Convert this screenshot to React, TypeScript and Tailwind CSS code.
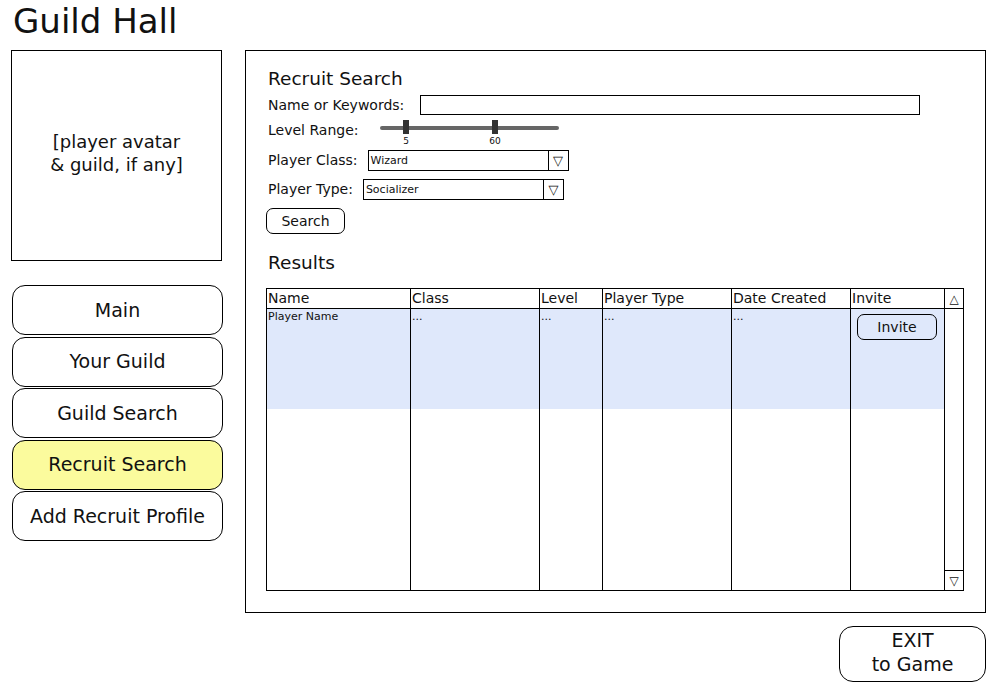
import React from "react";

const nav = ["Main", "Your Guild", "Guild Search", "Recruit Search", "Add Recruit Profile"];

const columns = [
	{ title: "Name", w: "w-[144px]", cell: "Player Name" },
	{ title: "Class", w: "w-[129px]", cell: "..." },
	{ title: "Level", w: "w-[63px]", cell: "..." },
	{ title: "Player Type", w: "w-[129px]", cell: "..." },
	{ title: "Date Created", w: "w-[119px]", cell: "..." },
];

function Dropdown({ value, width }: { value: string; width: string }) {
	return (
		<div className={`flex h-[21px] ${width} border border-black bg-white`}>
			<div className="flex-1 pl-[2px] text-[11px] leading-[19px]">{value}</div>
			<div className="flex w-[20px] items-center justify-center border-l border-black text-[13px] leading-none">
				▽
			</div>
		</div>
	);
}

export default function App() {
	return (
		<div className="h-[693px] w-[994px] bg-white font-['DejaVu_Sans',sans-serif] text-[#111]">
			<div className="h-[50px] pl-[13px] pt-[4px] text-[34px] leading-[34px]">Guild Hall</div>

			<div className="flex pl-[11px]">
				{/* left column */}
				<div className="flex w-[212px] flex-col">
					<div className="flex h-[211px] w-[211px] flex-col items-center justify-center border border-black pb-[5px] text-center text-[18px] leading-[23px]">
						<div>[player avatar</div>
						<div>&amp; guild, if any]</div>
					</div>
					<div className="ml-[1px] mt-[24px] flex flex-col gap-[1.5px]">
						{nav.map((n) => (
							<div
								key={n}
								className={`flex h-[50px] w-[211px] items-center justify-center rounded-[13px] border border-black text-[19px] ${
									n === "Recruit Search" ? "bg-[#fbfb9d]" : "bg-white"
								}`}
							>
								{n}
							</div>
						))}
					</div>
				</div>

				{/* right column */}
				<div className="ml-[22px] flex w-[741px] flex-col">
					<div className="flex h-[563px] flex-col border border-black pl-[22px]">
						<div className="mt-[16px] h-[24px] text-[18.5px] leading-[24px]">Recruit Search</div>

						<div className="mt-[4px] flex h-[20px] items-center gap-[16px]">
							<div className="text-[14px] leading-[20px]">Name or Keywords:</div>
							<div className="h-[20px] w-[500px] border border-black" />
						</div>

						<div className="mt-[2px] flex h-[30px]">
							<div className="mt-[5px] w-[112px] text-[14px] leading-[16px]">Level Range:</div>
							<div className="relative h-[30px] w-[180px]">
								<div className="absolute left-0 top-[9px] h-[4px] w-[179px] rounded-full bg-[#666]" />
								<div className="absolute left-[23px] top-[3px] h-[14px] w-[6px] bg-[#333]" />
								<div className="absolute left-[112px] top-[3px] h-[14px] w-[6px] bg-[#333]" />
								<div className="absolute left-[16px] top-[18px] w-[20px] text-center text-[9px] leading-[12px]">5</div>
								<div className="absolute left-[105px] top-[18px] w-[20px] text-center text-[9px] leading-[12px]">60</div>
							</div>
						</div>

						<div className="mt-[3px] flex h-[21px] items-center gap-[10px]">
							<div className="text-[14px]">Player Class:</div>
							<Dropdown value="Wizard" width="w-[201px]" />
						</div>

						<div className="mt-[8px] flex h-[21px] items-center gap-[10px]">
							<div className="text-[14px]">Player Type:</div>
							<Dropdown value="Socializer" width="w-[201px]" />
						</div>

						<div className="-ml-[2px] mt-[8px] flex h-[26px] w-[79px] items-center justify-center rounded-[7px] border border-black text-[14px]">
							Search
						</div>

						<div className="mt-[17px] h-[24px] text-[18.5px] leading-[24px]">Results</div>

						<div className="-ml-[2px] mt-[13px] flex h-[303px] w-[698px] border border-black">
							{columns.map((c) => (
								<div key={c.title} className={`flex ${c.w} flex-col border-r border-black`}>
									<div className="h-[20px] border-b border-black pl-[1px] text-[14px] leading-[19px]">{c.title}</div>
									<div className="h-[100px] bg-[#dfe8fb] pl-[1px] text-[11px] leading-[16px]">{c.cell}</div>
									<div className="flex-1" />
								</div>
							))}
							<div className="flex w-[94px] flex-col border-r border-black">
								<div className="h-[20px] border-b border-black pl-[1px] text-[14px] leading-[19px]">Invite</div>
								<div className="h-[100px] bg-[#dfe8fb] pl-[6px] pt-[5px]">
									<div className="flex h-[26px] w-[80px] items-center justify-center rounded-[7px] border border-black text-[14px]">
										Invite
									</div>
								</div>
								<div className="flex-1" />
							</div>
							<div className="flex flex-1 flex-col">
								<div className="flex h-[20px] items-center justify-center border-b border-black text-[12px] leading-none">△</div>
								<div className="flex-1" />
								<div className="flex h-[20px] items-center justify-center border-t border-black text-[12px] leading-none">▽</div>
							</div>
						</div>
					</div>

					<div className="mt-[13px] flex justify-end">
						<div className="flex h-[56px] w-[147px] flex-col items-center justify-center rounded-[14px] border border-black pb-[4px] text-[19px] leading-[24px]">
							<div>EXIT</div>
							<div>to Game</div>
						</div>
					</div>
				</div>
			</div>
		</div>
	);
}
